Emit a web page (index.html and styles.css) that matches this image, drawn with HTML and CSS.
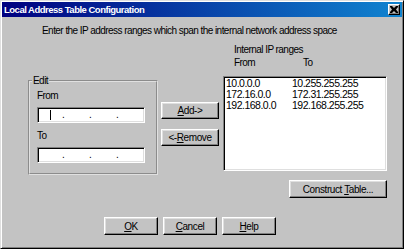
FILE: index.html
```html
<!DOCTYPE html>
<html>
<head>
    <meta charset="utf-8">
    <title>Local Address Table Configuration</title>
    <link rel="stylesheet" href="styles.css">
</head>
<body>
    <div class="window">
        <div class="titlebar">
            <span class="title">Local Address Table Configuration</span>
            <button class="close" aria-label="Close">
                <svg width="8" height="7" viewBox="0 0 8 7">
                    <path d="M0 0h2l2 2 2-2h2v1L6 3.5 8 6v1H6L4 5 2 7H0V6l2-2.5L0 1z" fill="#000"/>
                </svg>
            </button>
        </div>

        <div class="content">
            <p class="intro">Enter the IP address ranges which span the internal network address space</p>

            <div class="main">
                <fieldset class="edit-group">
                    <legend>Edit</legend>
                    <label class="field-label">From</label>
                    <div class="ip-input">
                        <span class="seg"><span class="caret"></span></span><span class="dot">.</span>
                        <span class="seg"></span><span class="dot">.</span>
                        <span class="seg"></span><span class="dot">.</span>
                        <span class="seg"></span>
                    </div>
                    <label class="field-label to">To</label>
                    <div class="ip-input">
                        <span class="seg"></span><span class="dot">.</span>
                        <span class="seg"></span><span class="dot">.</span>
                        <span class="seg"></span><span class="dot">.</span>
                        <span class="seg"></span>
                    </div>
                </fieldset>

                <div class="side-buttons">
                    <button class="btn"><u>A</u>dd-&gt;</button>
                    <button class="btn">&lt;-<u>R</u>emove</button>
                </div>

                <div class="ranges">
                    <div class="ranges-title">Internal IP ranges</div>
                    <div class="ranges-head">
                        <span>From</span>
                        <span>To</span>
                    </div>
                    <div class="listbox">
                        <div class="row"><span>10.0.0.0</span><span>10.255.255.255</span></div>
                        <div class="row"><span>172.16.0.0</span><span>172.31.255.255</span></div>
                        <div class="row"><span>192.168.0.0</span><span>192.168.255.255</span></div>
                    </div>
                    <div class="construct-row">
                        <button class="btn construct">Construct <u>T</u>able...</button>
                    </div>
                </div>
            </div>

            <div class="footer">
                <button class="btn"><u>O</u>K</button>
                <button class="btn"><u>C</u>ancel</button>
                <button class="btn"><u>H</u>elp</button>
            </div>
        </div>
    </div>
</body>
</html>
```

FILE: styles.css
```css
body {
    margin: 0;
    font-family: "Liberation Sans", Arial, sans-serif;
    font-size: 10px;
    letter-spacing: -0.55px;
    color: #000;
}

.window {
    width: 404px;
    height: 249px;
    box-sizing: border-box;
    background-color: #c3c3c3;
    border: 1px solid;
    border-color: #dfdfdf #000 #000 #dfdfdf;
    box-shadow: inset 1px 1px #fff, inset -1px -1px #808080;
    padding: 1px;
    display: flex;
    flex-direction: column;
}

.titlebar {
    height: 15px;
    background: linear-gradient(to right, #000080, #1084d0);
    display: flex;
    align-items: center;
    justify-content: space-between;
    padding: 0 2px 0 2px;
}

.title {
    color: #fff;
    font-weight: bold;
    font-size: 9.5px;
    letter-spacing: -0.5px;
}

.close {
    width: 12px;
    height: 11px;
    padding: 0;
    background-color: #c3c3c3;
    border: 1px solid;
    border-color: #fff #000 #000 #fff;
    box-shadow: inset -1px -1px #808080;
    display: flex;
    align-items: center;
    justify-content: center;
}

.content {
    flex: 1;
    display: flex;
    flex-direction: column;
}

.intro {
    margin: 8px 0 0 40px;
    line-height: 12px;
}

.main {
    display: flex;
    margin-top: 6px;
}

.edit-group {
    margin: 32px 0 0 26px;
    padding: 0 0 0 7px;
    width: 130px;
    height: 100px;
    box-sizing: border-box;
    border: 2px groove #e0e0e0;
}

.edit-group legend {
    padding: 0 1px;
    margin-left: -5px;
    line-height: 12px;
}

.field-label {
    display: block;
    line-height: 12px;
    margin-top: 3px;
}

.field-label.to {
    margin-top: 7px;
}

.ip-input {
    width: 108px;
    height: 16px;
    margin-top: 5px;
    box-sizing: border-box;
    background-color: #fff;
    border: 1px solid;
    border-color: #808080 #fff #fff #808080;
    box-shadow: inset 1px 1px #000, inset -1px -1px #dfdfdf;
    display: flex;
    align-items: center;
    padding-left: 2px;
}

.seg {
    width: 22px;
    height: 10px;
    display: flex;
    align-items: center;
    padding-left: 10px;
    box-sizing: border-box;
}

.seg:last-child {
    width: 14px;
}

.caret {
    width: 1px;
    height: 10px;
    background-color: #000;
}

.dot {
    width: 5px;
    line-height: 10px;
}

.side-buttons {
    display: flex;
    flex-direction: column;
    gap: 10px;
    margin: 59px 0 0 3px;
}

.btn {
    font-family: inherit;
    font-size: 10px;
    letter-spacing: -0.4px;
    width: 58px;
    height: 17px;
    padding: 0;
    background-color: #c3c3c3;
    color: #000;
    border: 1px solid;
    border-color: #fff #000 #000 #fff;
    box-shadow: inset -1px -1px #808080, inset 1px 1px #dfdfdf;
}

.ranges {
    margin-left: 4px;
    width: 164px;
}

.ranges-title {
    line-height: 12px;
    margin: 1px 0 0 11px;
}

.ranges-head {
    display: flex;
    line-height: 12px;
    margin: 1px 0 0 11px;
}

.ranges-head span:first-child {
    width: 69px;
}

.listbox {
    margin-top: 7px;
    height: 95px;
    box-sizing: border-box;
    background-color: #fff;
    border: 1px solid;
    border-color: #808080 #fff #fff #808080;
    box-shadow: inset 1px 1px #000, inset -1px -1px #dfdfdf;
    padding: 1px 0 0 2px;
    font-size: 10.5px;
    letter-spacing: -0.5px;
}

.row {
    display: flex;
    line-height: 11px;
}

.row span:first-child {
    width: 66px;
}

.construct-row {
    display: flex;
    justify-content: flex-end;
    margin-top: 9px;
}

.btn.construct {
    width: 98px;
    height: 18px;
}

.footer {
    display: flex;
    gap: 5px;
    margin: 19px 0 0 102px;
}

.footer .btn {
    width: 54px;
    height: 18px;
}
```
